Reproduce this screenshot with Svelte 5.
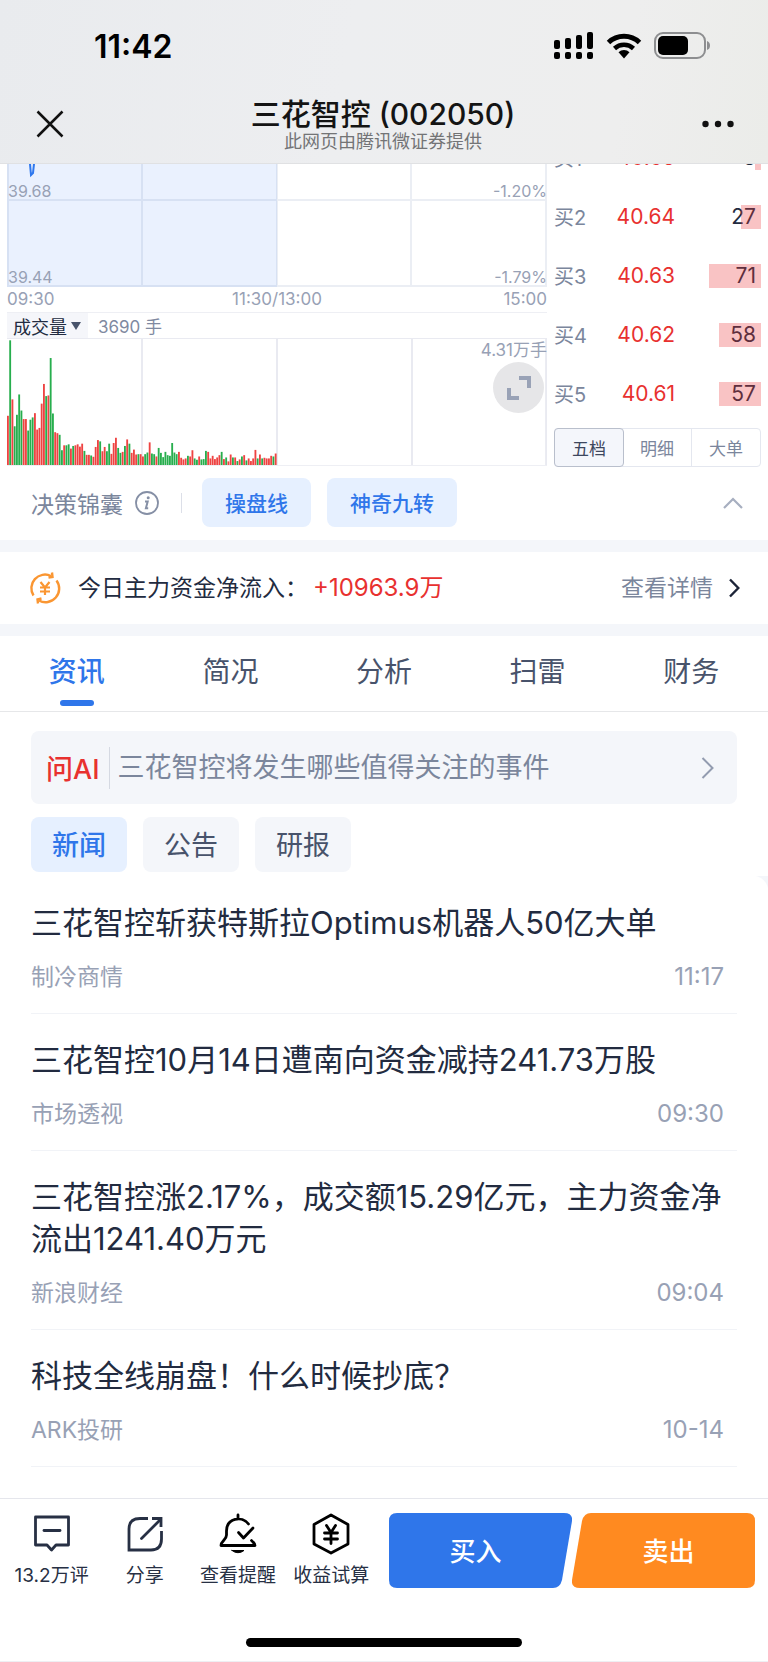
<script lang="ts">
	let depthTab = $state('五档');
	let mainTab = $state('资讯');
	let newsTab = $state('新闻');

	const depth = [
		{ name: '买1', price: '40.65', count: 8 },
		{ name: '买2', price: '40.64', count: 27 },
		{ name: '买3', price: '40.63', count: 71 },
		{ name: '买4', price: '40.62', count: 58 },
		{ name: '买5', price: '40.61', count: 57 }
	];

	const news = [
		{ title: '三花智控斩获特斯拉Optimus机器人50亿大单', source: '制冷商情', time: '11:17' },
		{ title: '三花智控10月14日遭南向资金减持241.73万股', source: '市场透视', time: '09:30' },
		{
			title: '三花智控涨2.17%，成交额15.29亿元，主力资金净流出1241.40万元',
			source: '新浪财经',
			time: '09:04'
		},
		{ title: '科技全线崩盘！什么时候抄底？', source: 'ARK投研', time: '10-14' }
	];

	// one bar per minute, r = up, g = down
	const volume = (
		'r150 g380 r200 g118 g153 g215 g166 r140 r140 g105 g138 g145 r158 r108 r113 r187 r247 g210 r212 g326 ' +
		'g157 r100 r97 g92 g45 r60 g60 g63 r50 g58 r60 r63 r56 r65 g43 r31 r31 g29 r25 r55 ' +
		'r76 g72 r42 r55 g42 g65 r34 r67 r83 g52 g37 r40 g58 r78 g65 r37 r47 r32 g33 r33 ' +
		'r26 g33 g38 r69 g35 g33 r26 g52 g37 g24 g40 g30 g28 g67 g38 g33 r40 r22 r17 r20 ' +
		'g28 r26 r45 g20 g16 r26 g17 g18 g43 r40 r20 r28 r18 r23 r30 g40 r18 g23 r11 r32 ' +
		'g23 r23 g12 r17 g26 r30 g14 r20 r12 r20 r46 g20 r32 g20 r22 r20 r20 r28 g26 r35'
	)
		.split(' ')
		.map((v) => ({ up: v[0] === 'r', size: Number(v.slice(1)) }));
</script>

<div class="page">
	<header>
		<div class="status">
			<span class="clock">11:42</span>
			<div class="status-icons">
				<svg width="40" height="28" viewBox="0 0 40 28">
					<rect x="0" y="8" width="6" height="9" rx="2" />
					<rect x="11" y="6" width="6" height="11" rx="2" />
					<rect x="22" y="3" width="6" height="14" rx="2" />
					<rect x="33" y="0" width="6" height="17" rx="2" />
					<rect x="0" y="20" width="6" height="7" rx="2" />
					<rect x="11" y="20" width="6" height="7" rx="2" />
					<rect x="22" y="20" width="6" height="7" rx="2" />
					<rect x="33" y="20" width="6" height="7" rx="2" />
				</svg>
				<svg width="36" height="26" viewBox="0 0 36 26">
					<path d="M2.5 9.5a22.5 22.5 0 0 1 31 0" fill="none" stroke="#000" stroke-width="5" />
					<path d="M8.5 15.5a14 14 0 0 1 19 0" fill="none" stroke="#000" stroke-width="4.5" />
					<path d="M18 25.5l-5.500-6.300a8 8 0 0 1 11 0z" />
				</svg>
				<svg width="56" height="28" viewBox="0 0 56 28">
					<rect x="1" y="1" width="50" height="25" rx="8" fill="none" stroke="#8d8e90" stroke-width="2" />
					<path d="M53 9q3 1 3 4.500t-3 4.500z" fill="#8d8e90" />
					<rect x="4" y="4" width="30" height="19" rx="5" />
				</svg>
			</div>
		</div>
		<div class="nav">
			<button class="plain" aria-label="关闭">
				<svg width="28" height="28" viewBox="0 0 28 28" fill="none" stroke="#111" stroke-width="2.500">
					<path d="M1.500 1.500l25 25M26.500 1.500l-25 25" />
				</svg>
			</button>
			<div class="titles">
				<h1>三花智控 (002050)</h1>
				<p>此网页由腾讯微证券提供</p>
			</div>
			<button class="plain" aria-label="更多">
				<svg width="32" height="8" viewBox="0 0 32 8" fill="#111">
					<circle cx="3.500" cy="4" r="3.200" /><circle cx="16" cy="4" r="3.200" /><circle cx="28.500" cy="4" r="3.200" />
				</svg>
			</button>
		</div>
	</header>

	<main>
		<section class="quote">
			<div class="charts">
				<div class="price-chart">
					<svg viewBox="0 0 540 123" preserveAspectRatio="none">
						<rect width="270" height="123" fill="#eaf1fe" />
						<g stroke="#1c3d8a" stroke-opacity="0.090" stroke-width="2">
							<path d="M0 36H540M135 0V123M270 0V123M404 0V123M1 0V123M539 0V123M0 122H540" />
						</g>
						<path d="M23 0L24 11L26 9L27 0" fill="none" stroke="#2f78ee" stroke-width="2" />
					</svg>
					<span class="label upper">39.68</span>
					<span class="label upper right">-1.20%</span>
					<span class="label lower">39.44</span>
					<span class="label lower right">-1.79%</span>
				</div>
				<div class="times">
					<span>09:30</span><span>11:30/13:00</span><span>15:00</span>
				</div>
				<div class="volume-head">
					<button class="indicator">
						成交量
						<svg width="10" height="8" viewBox="0 0 10 8" fill="#48536b"><path d="M0 0H10L5 8z" /></svg>
					</button>
					<span>3690 手</span>
				</div>
				<div class="volume-chart">
					<svg viewBox="0 0 240 384" preserveAspectRatio="none">
						<path
							d="M60 0V384M120 0V384M180 0V384M239.600 0V384"
							stroke="#e9eaf1"
							stroke-width="2"
							vector-effect="non-scaling-stroke"
						/>
						{#each volume as bar, i}
							<rect x={i} y={384 - bar.size} width="0.820" height={bar.size} fill={bar.up ? '#ee4342' : '#27ae4d'} />
						{/each}
					</svg>
					<span class="label max right">4.31万手</span>
					<button class="expand" aria-label="全屏">
						<svg width="26" height="26" viewBox="0 0 26 26" fill="none" stroke="#99a2b6" stroke-width="4">
							<path d="M13 3H23V13M3 13V23H13" />
						</svg>
					</button>
				</div>
			</div>

			<div class="depth">
				<ul>
					{#each depth as row}
						<li>
							<span class="name">{row.name}</span>
							<span class="price">{row.price}</span>
							<span class="count">{row.count}<i style="width: {Math.round(row.count * 0.73)}px"></i></span>
						</li>
					{/each}
				</ul>
				<div class="segment">
					{#each ['五档', '明细', '大单'] as t}
						<button class:active={depthTab === t} onclick={() => (depthTab = t)}>{t}</button>
					{/each}
				</div>
			</div>
		</section>

		<section class="tools">
			<span>决策锦囊</span>
			<svg width="24" height="24" viewBox="0 0 24 24" fill="none" stroke="#858fa5">
				<circle cx="12" cy="12" r="11" stroke-width="1.800" />
				<path d="M10 10.500h2.700l-1.800 6.700h2.300" stroke-width="2" />
				<circle cx="13.200" cy="6.800" r="1.500" fill="#858fa5" stroke="none" />
			</svg>
			<i class="bar"></i>
			<button class="tag">操盘线</button>
			<button class="tag">神奇九转</button>
			<button class="plain collapse" aria-label="收起">
				<svg width="20" height="12" viewBox="0 0 20 12" fill="none" stroke="#a7afc0" stroke-width="2.200">
					<path d="M1 11L10 2L19 11" />
				</svg>
			</button>
		</section>

		<section class="flow">
			<svg width="32" height="34" viewBox="0 0 32 34" fill="none" stroke="#fa9632" stroke-width="2.400">
				<path d="M4.500 24.500A13.600 13.600 0 0 1 22 5M27.500 9.500A13.600 13.600 0 0 1 10 29.500" />
				<path d="M19.500 6.500L23.500 6L23 1.500M12.500 27.500L8.500 28.500L9 32.500" />
				<path d="M11.500 11L16 16.500L20.500 11M16 16.500V24M11 16.500H21M11 20.500H21" stroke-width="2.200" />
			</svg>
			<span class="flow-text">今日主力资金净流入：</span>
			<span class="flow-value">+10963.9万</span>
			<a href="#detail">
				查看详情
				<svg width="12" height="20" viewBox="0 0 12 20" fill="none" stroke="#1c2438" stroke-width="2.400">
					<path d="M2 1.500L10.300 10L2 18.500" />
				</svg>
			</a>
		</section>

		<nav class="tabs">
			{#each ['资讯', '简况', '分析', '扫雷', '财务'] as t}
				<button class:active={mainTab === t} onclick={() => (mainTab = t)}>{t}</button>
			{/each}
		</nav>

		<a class="ask" href="#ask">
			<strong>问AI</strong>
			<span>三花智控将发生哪些值得关注的事件</span>
			<svg width="13" height="22" viewBox="0 0 13 22" fill="none" stroke="#939cb0" stroke-width="2">
				<path d="M1.500 1L11.500 11L1.500 21" />
			</svg>
		</a>

		<div class="pills">
			{#each ['新闻', '公告', '研报'] as t}
				<button class:active={newsTab === t} onclick={() => (newsTab = t)}>{t}</button>
			{/each}
		</div>

		<div class="news">
			{#each news as item}
				<article>
					<h2>{item.title}</h2>
					<p><span>{item.source}</span><time>{item.time}</time></p>
				</article>
			{/each}
		</div>
	</main>

	<footer>
		<div class="actions">
			<div class="shortcuts">
				<button>
					<svg width="40" height="42" viewBox="0 0 40 42" fill="none" stroke="#273044" stroke-width="2.800" stroke-linejoin="round">
						<path d="M3.500 4H36.500V32H24L19.500 37L15 32H3.500Z" />
						<path d="M12 17.500H28" stroke-linecap="round" />
					</svg>
					13.2万评
				</button>
				<button>
					<svg width="40" height="42" viewBox="0 0 40 42" fill="none" stroke="#273044" stroke-width="2.800">
						<path d="M23 5.500H15Q4 5.500 4 16V37H26Q36.500 37 36.500 26V18" />
						<path d="M16.500 25.500L35 7" stroke-linecap="round" />
						<path d="M27 5.500H36V14" />
					</svg>
					分享
				</button>
				<button>
					<svg width="40" height="42" viewBox="0 0 40 42" fill="none" stroke="#000" stroke-width="2.800" stroke-linecap="round" stroke-linejoin="round">
						<path d="M20 2V6M30.500 11C24 2.500 8.500 5 8.500 18V22C8.500 27 3 28 3 32.500H37C37 30 35 29.500 33.500 27.500" />
						<path d="M20.500 19.500L25.500 25L35 15" />
						<path d="M14 37.500H26Q20 42 14 37.500z" fill="#000" stroke-width="1" />
					</svg>
					查看提醒
				</button>
				<button>
					<svg width="40" height="42" viewBox="0 0 40 42" fill="none" stroke="#000" stroke-width="2.800" stroke-linecap="round" stroke-linejoin="round">
						<path d="M20 2L37 11.500V31L20 40L3 31V11.500Z" />
						<path d="M15.500 12.500L20 19.500L24.500 12.500M20 19.500V30.500M13.500 20H26.500M13.500 26H26.500" />
					</svg>
					收益试算
				</button>
			</div>
			<button class="trade buy">
				<svg viewBox="0 0 183 75" preserveAspectRatio="none" fill="#2f76ea">
					<path d="M8 0H175Q184 0 183 8L173 67Q171 75 164 75H8Q0 75 0 67V8Q0 0 8 0z" />
				</svg>
				<span>买入</span>
			</button>
			<button class="trade sell">
				<svg viewBox="0 0 183 75" preserveAspectRatio="none" fill="#ff8a20">
					<path d="M19 0H175Q183 0 183 8V67Q183 75 175 75H8Q-1 75 0 67L10 8Q12 0 19 0z" />
				</svg>
				<span>卖出</span>
			</button>
		</div>
		<div class="home"></div>
	</footer>
</div>

<style>
	:global(body) {
		background: #fff;
	}

	.page {
		height: 100vh;
		display: flex;
		flex-direction: column;
		overflow: hidden;
		font-family: Inter, 'Noto Sans CJK SC', sans-serif;
		color: #222b40;
	}

	button {
		font-family: inherit;
		margin: 0;
		padding: 0;
		border: none;
		background: none;
		color: inherit;
		cursor: pointer;
	}

	svg {
		display: block;
	}

	h1,
	h2,
	p,
	ul {
		margin: 0;
		padding: 0;
		font-weight: 400;
	}

	a {
		color: inherit;
		text-decoration: none;
	}

	header {
		background: linear-gradient(100deg, #e9ebee 0%, #edeef0 45%, #eeeeee 80%, #ebece9 100%);
		border-bottom: 1px solid #e0e1e3;
	}

	.status {
		height: 88px;
		padding: 4px 58px 0 94px;
		box-sizing: border-box;
		display: flex;
		align-items: center;
		justify-content: space-between;
	}

	.clock {
		font-size: 32px;
		font-weight: 600;
		color: #000;
	}

	.status-icons {
		display: flex;
		align-items: center;
		gap: 12px;
	}

	.nav {
		height: 71px;
		padding: 0 34px 4px 36px;
		display: flex;
		align-items: center;
		justify-content: space-between;
	}

	.titles {
		text-align: center;
	}

	.titles h1 {
		font-size: 30px;
		line-height: 36px;
		font-weight: 500;
		color: #141414;
	}

	.titles p {
		font-size: 18px;
		line-height: 20px;
		color: #737476;
	}

	main {
		flex: 1;
		overflow: hidden;
	}

	.quote {
		display: flex;
		padding: 0 7px;
		height: 303px;
	}

	.charts {
		flex: 1;
		font-size: 17px;
		color: #98a1b5;
	}

	.price-chart,
	.volume-chart {
		position: relative;
	}

	.price-chart svg {
		width: 100%;
		height: 123px;
	}

	.label {
		position: absolute;
		left: 1px;
		font-size: 16px;
		line-height: 20px;
	}

	.label.right {
		left: auto;
		right: 0;
	}

	.upper {
		top: 17px;
	}

	.lower {
		bottom: 0;
	}

	.max {
		top: 1px;
		font-size: 17px;
	}

	.times {
		display: grid;
		grid-template-columns: 1fr auto 1fr;
		line-height: 25px;
		border-bottom: 1px solid #eeeff4;
	}

	.times span:last-child {
		text-align: right;
	}

	.volume-head {
		display: flex;
		align-items: center;
		gap: 10px;
		height: 25px;
		border-bottom: 1px solid #e9eaf1;
		color: #7f8aa1;
	}

	.indicator {
		display: flex;
		align-items: center;
		gap: 4px;
		height: 25px;
		padding: 0 7px 0 6px;
		background: #f5f6fa;
		font-size: 18px;
		color: #222b40;
	}

	.volume-chart > svg {
		width: 100%;
		height: 126px;
		border-bottom: 1px solid #eeeff4;
	}

	.expand {
		position: absolute;
		right: 3px;
		top: 23px;
		width: 51px;
		height: 51px;
		border-radius: 50%;
		background: #e6e6e8;
		display: flex;
		align-items: center;
		justify-content: center;
	}

	.depth {
		width: 207px;
		padding-left: 7px;
	}

	.depth ul {
		list-style: none;
		margin-top: -36px;
	}

	.depth li {
		display: flex;
		align-items: center;
		height: 59px;
	}

	.name {
		width: 42px;
		font-size: 20px;
		color: #7b869c;
	}

	.price {
		width: 79px;
		text-align: right;
		font-size: 21px;
		color: #e8312f;
	}

	.count {
		flex: 1;
		position: relative;
		padding-right: 5px;
		text-align: right;
		font-size: 21px;
		line-height: 24px;
	}

	.count i {
		position: absolute;
		right: 0;
		top: 0;
		height: 24px;
		background: rgba(236, 56, 60, 0.3);
	}

	.segment {
		display: flex;
		height: 39px;
		margin-top: 5px;
		box-sizing: border-box;
		border: 1px solid #e4e7ef;
		border-radius: 4px;
	}

	.segment button {
		flex: 1;
		font-size: 17px;
		color: #7b869c;
	}

	.segment button:last-child {
		border-left: 1px solid #e4e7ef;
	}

	.segment .active {
		margin: -1px;
		border: 1px solid #b9bfcc;
		border-radius: 4px;
		background: #f4f6fb;
		color: #3d475e;
	}

	.tools {
		display: flex;
		align-items: center;
		height: 71px;
		padding: 0 25px 2px 31px;
		font-size: 23px;
		color: #7b869c;
	}

	.tools > svg {
		margin-left: 12px;
	}

	.bar {
		width: 1px;
		height: 20px;
		margin: 0 20px 0 22px;
		background: #dcdfe8;
	}

	.tag {
		height: 49px;
		padding: 0 23px 2px;
		margin-right: 16px;
		border-radius: 8px;
		background: #e6f0ff;
		color: #2f76ea;
		font-size: 21px;
		font-weight: 500;
	}

	.collapse {
		margin-left: auto;
	}

	.flow {
		display: flex;
		align-items: center;
		height: 72px;
		padding: 0 28px 0 29px;
		border: solid #f4f6fa;
		border-width: 12px 0;
		font-size: 23px;
		line-height: 34px;
	}

	.flow-text {
		margin-left: 17px;
	}

	.flow-value {
		margin-left: 5px;
		font-size: 24px;
		color: #e8312f;
	}

	.flow a {
		display: flex;
		align-items: center;
		gap: 15px;
		margin-left: auto;
		color: #7b869c;
	}

	.tabs {
		display: flex;
		height: 75px;
		border-bottom: 1px solid #e6e7e9;
	}

	.tabs button {
		flex: 1;
		position: relative;
		padding-bottom: 7px;
		font-size: 28px;
		color: #48536b;
	}

	.tabs .active {
		color: #2f76ea;
		font-weight: 500;
	}

	.tabs .active::after {
		content: '';
		position: absolute;
		left: 50%;
		bottom: 5px;
		width: 34px;
		height: 6px;
		margin-left: -17px;
		border-radius: 3px;
		background: #2f76ea;
	}

	.ask {
		display: flex;
		align-items: center;
		height: 73px;
		margin: 19px 31px 13px;
		padding: 0 23px 0 15px;
		border-radius: 8px;
		background: #f4f6fa;
		font-size: 27px;
		color: #7b869c;
	}

	.ask strong {
		font-weight: 500;
		color: #e8312f;
	}

	.ask span {
		margin-left: 9px;
		padding-left: 8px;
		border-left: 1px solid #d5d9e2;
		line-height: 42px;
	}

	.ask svg {
		margin-left: auto;
	}

	.pills {
		display: flex;
		gap: 16px;
		padding: 0 31px;
	}

	.pills button {
		width: 96px;
		height: 55px;
		padding-bottom: 2px;
		border-radius: 8px;
		background: #f4f6fa;
		font-size: 27px;
		color: #48536b;
	}

	.pills .active {
		background: #e6f0ff;
		color: #2f76ea;
		font-weight: 500;
	}

	.news {
		margin-top: 4px;
		padding: 1px 31px 0;
		background: radial-gradient(circle at 0 100%, #fff 16px, #f4f6fa 17px) right top / 16px 16px no-repeat;
	}

	.news article {
		padding: 25px 0 20px;
		border-bottom: 1px solid #f1f3f7;
	}

	.news h2 {
		font-size: 31px;
		line-height: 42px;
	}

	.news p {
		display: flex;
		justify-content: space-between;
		margin-top: 17px;
		padding-right: 13px;
		font-size: 23px;
		line-height: 32px;
		color: #98a1b5;
	}

	.news time {
		font-size: 24px;
	}

	footer {
		height: 162px;
		border-top: 1px solid #e5e6ec;
		border-bottom: 1px solid #eeeff3;
		background: #fff;
		display: flex;
		flex-direction: column;
		justify-content: space-between;
	}

	.actions {
		display: flex;
		padding: 14px 13px 0 5px;
	}

	.shortcuts {
		display: flex;
		flex: 1;
		margin-right: 11px;
	}

	.shortcuts button {
		flex: 1 1 0;
		display: flex;
		flex-direction: column;
		align-items: center;
		gap: 8px;
		font-size: 19px;
		line-height: 26px;
		white-space: nowrap;
		color: #273044;
	}

	.trade {
		position: relative;
		flex: 0 1 183px;
		height: 75px;
		padding-bottom: 3px;
		font-size: 26px;
		font-weight: 500;
		color: #fff;
	}

	.trade svg {
		position: absolute;
		inset: 0;
		width: 100%;
		height: 100%;
	}

	.trade span {
		position: relative;
	}

	.buy {
		padding-right: 10px;
	}

	.sell {
		padding-left: 10px;
	}

	.home {
		width: 36%;
		height: 9px;
		margin: 0 auto 14px;
		border-radius: 5px;
		background: #000;
	}
</style>
